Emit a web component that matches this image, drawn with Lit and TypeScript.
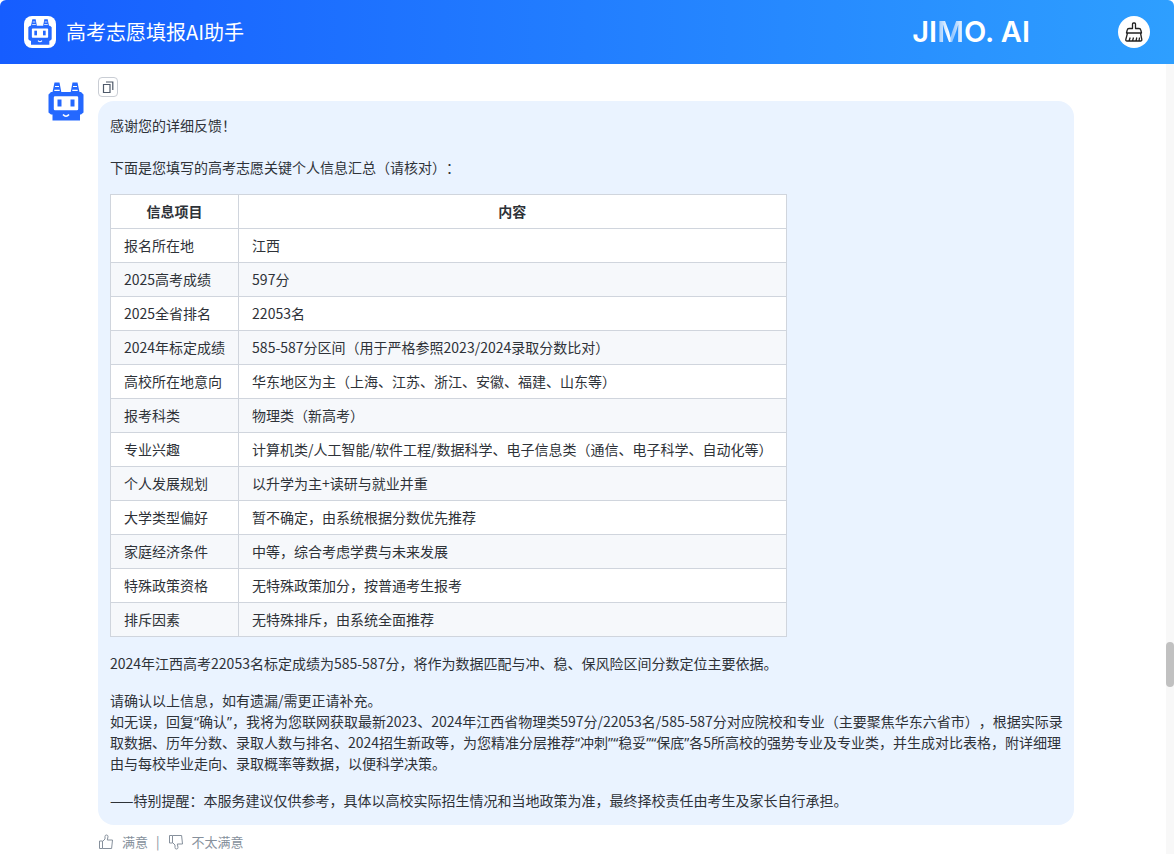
import { LitElement, html, css, svg } from "lit";
import { customElement } from "lit/decorators.js";

const robot = svg`
  <path fill="currentColor" fill-rule="evenodd" d="M6.500 0.500h5L13.300 10h9.400L24.500 0.500h5L31.500 10h1.500l2.500 2.500v18L33 32.500h-1V38.500H4.500V32.500H3L0.500 30.500V12.500L3 10h1.500zM7 14.300q-1.200 0-1.200 1.200v11.500q0 1.200 1.200 1.200h22q1.200 0 1.200-1.200v-11.500q0-1.200-1.200-1.200z"/>
  <rect x="9.500" y="17.500" width="4" height="7" fill="currentColor"/>
  <rect x="22.500" y="17.500" width="4" height="7" fill="currentColor"/>
  <path fill="none" stroke="#fff" stroke-width="1.200" d="M7 4.500h4M6.300 8.300h5.400M25 4.500h4M24.300 8.300h5.400"/>
  <path fill="none" stroke="#fff" stroke-width="1.600" d="M15 32.500q3 3.500 6 0"/>`;

const thumb = svg`
  <path d="M1.500 7h3v7.500h-3zM4.500 7.500L7 5V2.500Q7 1 8.500 1T10 2.700L9.300 6H14.500L13.600 14.500H4.500"/>`;

const rows: [string, string][] = [
  ["报名所在地", "江西"],
  ["2025高考成绩", "597分"],
  ["2025全省排名", "22053名"],
  ["2024年标定成绩", "585-587分区间（用于严格参照2023/2024录取分数比对）"],
  ["高校所在地意向", "华东地区为主（上海、江苏、浙江、安徽、福建、山东等）"],
  ["报考科类", "物理类（新高考）"],
  ["专业兴趣", "计算机类/人工智能/软件工程/数据科学、电子信息类（通信、电子科学、自动化等）"],
  ["个人发展规划", "以升学为主+读研与就业并重"],
  ["大学类型偏好", "暂不确定，由系统根据分数优先推荐"],
  ["家庭经济条件", "中等，综合考虑学费与未来发展"],
  ["特殊政策资格", "无特殊政策加分，按普通考生报考"],
  ["排斥因素", "无特殊排斥，由系统全面推荐"],
];

@customElement("app-root")
class AppRoot extends LitElement {
  static styles = css`
    :host {
      display: flex;
      flex-direction: column;
      min-height: 100vh;
      box-sizing: border-box;
      padding-bottom: 8px;
      background: #fff;
      color: #2e3238;
      font: 14px/21px "Noto Sans CJK SC", sans-serif;
      text-spacing-trim: space-all;
    }
    button {
      display: flex;
      align-items: center;
      justify-content: center;
      padding: 0;
      border: 0;
      background: none;
      color: inherit;
      font: inherit;
      cursor: pointer;
    }
    .header {
      display: flex;
      align-items: center;
      height: 64px;
      padding: 0 24px;
      border-radius: 6px 6px 0 0;
      background: linear-gradient(90deg, #165dff, #2e9fff);
      color: #fff;
    }
    .badge {
      display: flex;
      align-items: center;
      justify-content: center;
      width: 32px;
      height: 32px;
      border-radius: 8px;
      background: #fff;
      color: #2468ff;
    }
    .title {
      flex: 1;
      margin: 0 0 0 10px;
      font-size: 20px;
      line-height: 32px;
      font-weight: 400;
    }
    .brand {
      margin-right: 88px;
      font: 600 29px/32px Inter, sans-serif;
      white-space: pre;
    }
    .fade {
      background: linear-gradient(90deg, #8fc4ff, #fff 45%, #8fc4ff 55%, #fff);
      background-clip: text;
      color: transparent;
    }
    .clean {
      width: 32px;
      height: 32px;
      border-radius: 50%;
      background: #fff;
      color: #222;
    }
    .body {
      flex: 1;
      display: flex;
    }
    .chat {
      flex: 1;
      display: flex;
      align-items: flex-start;
      gap: 14px;
      padding: 13px 92px 0 48px;
    }
    .avatar {
      flex: none;
      margin-top: 5px;
      color: #2468ff;
    }
    .message {
      flex: 1;
      min-width: 0;
    }
    .copy {
      width: 20px;
      height: 20px;
      border: 1px solid #c9cdd4;
      border-radius: 4px;
      color: #4e5969;
    }
    .bubble {
      margin-top: 4px;
      padding: 14px 10px 14px 12px;
      border-radius: 16px;
      background: #eaf3ff;
    }
    p {
      margin: 0 0 16px;
    }
    .lead {
      margin-bottom: 21px;
    }
    .last {
      margin: 0;
    }
    .quoted {
      font-family: "Noto Sans", "Noto Sans CJK SC", sans-serif;
    }
    table {
      margin-bottom: 16px;
      border-collapse: collapse;
      background: #fff;
    }
    th,
    td {
      padding: 6px 13px;
      border: 1px solid #d0d5dd;
      text-align: left;
      font-weight: 400;
    }
    thead th {
      text-align: center;
      font-weight: 700;
    }
    tbody tr:nth-child(even) {
      background: #f6f8fb;
    }
    .feedback {
      display: flex;
      align-items: center;
      gap: 8px;
      margin-top: 6px;
      color: #86909c;
      font-size: 13px;
    }
    .feedback button {
      gap: 8px;
    }
    .scroll {
      display: flex;
      flex-direction: column;
      width: 8px;
      background: #f8f8f8;
    }
    .before {
      flex: 578;
    }
    .thumb {
      flex: 45;
      border-radius: 4px;
      background: #c1c1c1;
    }
    .after {
      flex: 167;
    }
  `;

  render() {
    return html`
      <header class="header">
        <span class="badge"><svg width="24" height="26" viewBox="0 0 36 39">${robot}</svg></span>
        <h1 class="title">高考志愿填报AI助手</h1>
        <span class="brand">JI<span class="fade">M</span>O. AI</span>
        <button class="clean" aria-label="清空对话">
          <svg width="20" height="22" viewBox="0 0 20 22" fill="none" stroke="currentColor" stroke-width="1.300" stroke-linejoin="round">
            <path d="M8.500 7.500V3q0-1 1-1h1q1 0 1 1v4.500H15q1.500 0 1.800 1.500l.7 3h-15L3.200 9Q3.500 7.500 5 7.500zM3.500 12L1.800 18.500Q1.500 20 3 20H16.500q1.500 0 1.300-1.500L16.500 12M5 20l1.200-3.500M8.500 20l1-3.500M12 20l.8-3.500M15 20l.5-3.500"/>
          </svg>
        </button>
      </header>
      <div class="body">
        <main class="chat">
          <svg class="avatar" width="36" height="39" viewBox="0 0 36 39">${robot}</svg>
          <div class="message">
            <button class="copy" aria-label="复制">
              <svg width="12" height="12" viewBox="0 0 12 12" fill="none" stroke="currentColor" stroke-width="1.200">
                <path d="M1.500 3.500h6.500v8H1.500zM4 1h6.800v8"/>
              </svg>
            </button>
            <div class="bubble">
              <p class="lead">感谢您的详细反馈！</p>
              <p>下面是您填写的高考志愿关键个人信息汇总（请核对）：</p>
              <table>
                <thead>
                  <tr><th scope="col">信息项目</th><th scope="col">内容</th></tr>
                </thead>
                <tbody>
                  ${rows.map(([k, v]) => html`<tr><th scope="row">${k}</th><td>${v}</td></tr>`)}
                </tbody>
              </table>
              <p>2024年江西高考22053名标定成绩为585-587分，将作为数据匹配与冲、稳、保风险区间分数定位主要依据。</p>
              <p>请确认以上信息，如有遗漏/需更正请补充。<br />如无误，回复<span class="quoted">“确认”</span>，我将为您联网获取最新2023、2024年江西省物理类597分/22053名/585-587分对应院校和专业（主要聚焦华东六省市），根据实际录取数据、历年分数、录取人数与排名、2024招生新政等，为您精准分层推荐<span class="quoted">“冲刺”“稳妥”“保底”</span>各5所高校的强势专业及专业类，并生成对比表格，附详细理由与每校毕业走向、录取概率等数据，以便科学决策。</p>
              <p class="last">——特别提醒：本服务建议仅供参考，具体以高校实际招生情况和当地政策为准，最终择校责任由考生及家长自行承担。</p>
            </div>
            <div class="feedback">
              <button>
                <svg width="16" height="16" viewBox="0 0 16 16" fill="none" stroke="currentColor">${thumb}</svg>满意
              </button>
              <span>|</span>
              <button>
                <svg width="16" height="16" viewBox="0 0 16 16" fill="none" stroke="currentColor"><g transform="matrix(1 0 0 -1 0 16)">${thumb}</g></svg>不太满意
              </button>
            </div>
          </div>
        </main>
        <div class="scroll" aria-hidden="true">
          <div class="before"></div>
          <div class="thumb"></div>
          <div class="after"></div>
        </div>
      </div>
    `;
  }
}
